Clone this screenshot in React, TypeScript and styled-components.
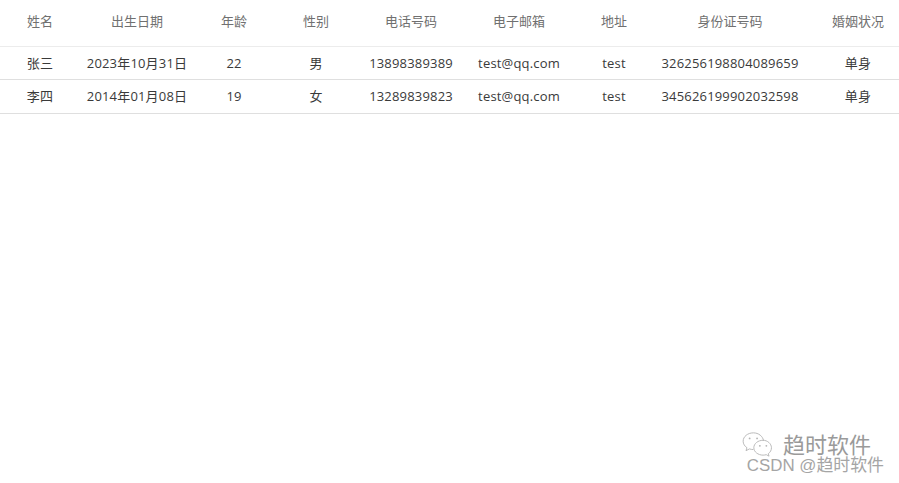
import React from "react";
import styled, {createGlobalStyle} from "styled-components";

const GlobalStyle = createGlobalStyle`
  html, body {
    margin: 0;
    padding: 0;
    background-color: #ffffff;
    overflow: hidden;
  }
  body {
    font-family: "Open Sans", "Noto Sans CJK SC", sans-serif;
  }
`;

const Page = styled.div`
  width: 899px;
  height: 483px;
  position: relative;
  overflow: hidden;
`;

const Table = styled.table`
  width: 910px;
  table-layout: fixed;
  border-collapse: collapse;
  font-size: 13px;
  line-height: 16px;
`;

const HeadCell = styled.th`
  height: 46px;
  padding: 0 0 4px;
  box-sizing: border-box;
  text-align: center;
  font-weight: normal;
  color: #707070;
  border-bottom: 1px solid #ececec;
`;

const BodyCell = styled.td`
  height: 32.5px;
  padding: 0;
  text-align: center;
  color: #3a3a3a;
  letter-spacing: 0.18px;
  border-bottom: 1px solid #dfdfdf;
`;

const Watermark = styled.div`
  position: absolute;
  right: 15px;
  bottom: 9px;
  width: 143px;
  display: flex;
  flex-direction: column;
  align-items: flex-end;
`;

const BrandRow = styled.div`
  display: flex;
  align-items: center;
  align-self: flex-start;
  gap: 8px;
`;

const BrandName = styled.span`
  font-size: 22px;
  line-height: 24px;
  color: #9a9a9a;
  text-shadow: 0 0 1px #ffffff;
`;

const Credit = styled.span`
  font-family: "Liberation Sans", "Noto Sans CJK SC", sans-serif;
  font-size: 16.9px;
  line-height: 17px;
  color: #a5a5a5;
  white-space: nowrap;
`;

const columns = [80, 114, 80, 84, 106, 110, 80, 152, 104];
const heads = ["姓名", "出生日期", "年龄", "性别", "电话号码", "电子邮箱", "地址", "身份证号码", "婚姻状况"];
const rows = [
    ["张三", "2023年10月31日", "22", "男", "13898389389", "test@qq.com", "test", "326256198804089659", "单身"],
    ["李四", "2014年01月08日", "19", "女", "13289839823", "test@qq.com", "test", "345626199902032598", "单身"],
];

const WechatIcon = () => (
    <svg width="34" height="26" viewBox="0 0 36 28" fill="none" stroke="#b5b5b5" strokeWidth="1">
        <path d="M13 2C6.9 2 2 6 2 11c0 2.9 1.6 5.3 4.1 7l-1 3.2 3.7-1.9c1.3.4 2.8.7 4.2.7" />
        <path d="M24 10.5C23.2 5.6 18.6 2 13 2" />
        <path d="M23.5 10c-5.5 0-10 3.6-10 8s4.500 8 10 8c1.200 0 2.300-.2 3.400-.5l3 1.600-.8-2.700c2.200-1.500 3.400-3.800 3.400-6.400 0-4.400-4.500-8-9-8z" />
        <circle cx="9" cy="8" r="1" fill="#b5b5b5" stroke="none" />
        <circle cx="17" cy="8" r="1" fill="#b5b5b5" stroke="none" />
        <circle cx="20" cy="16" r="1" fill="#b5b5b5" stroke="none" />
        <circle cx="27" cy="16" r="1" fill="#b5b5b5" stroke="none" />
    </svg>
);

const App = () => {
    return (
        <Page>
            <GlobalStyle />
            <Table>
                <colgroup>
                    {columns.map((width, i) => <col key={i} style={{width}} />)}
                </colgroup>
                <thead>
                    <tr>
                        {heads.map((head) => <HeadCell key={head}>{head}</HeadCell>)}
                    </tr>
                </thead>
                <tbody>
                    {rows.map((row) => (
                        <tr key={row[0]}>
                            {row.map((cell, i) => <BodyCell key={i}>{cell}</BodyCell>)}
                        </tr>
                    ))}
                </tbody>
            </Table>
            <Watermark>
                <BrandRow>
                    <WechatIcon />
                    <BrandName>趋时软件</BrandName>
                </BrandRow>
                <Credit>CSDN @趋时软件</Credit>
            </Watermark>
        </Page>
    );
};

export default App;
